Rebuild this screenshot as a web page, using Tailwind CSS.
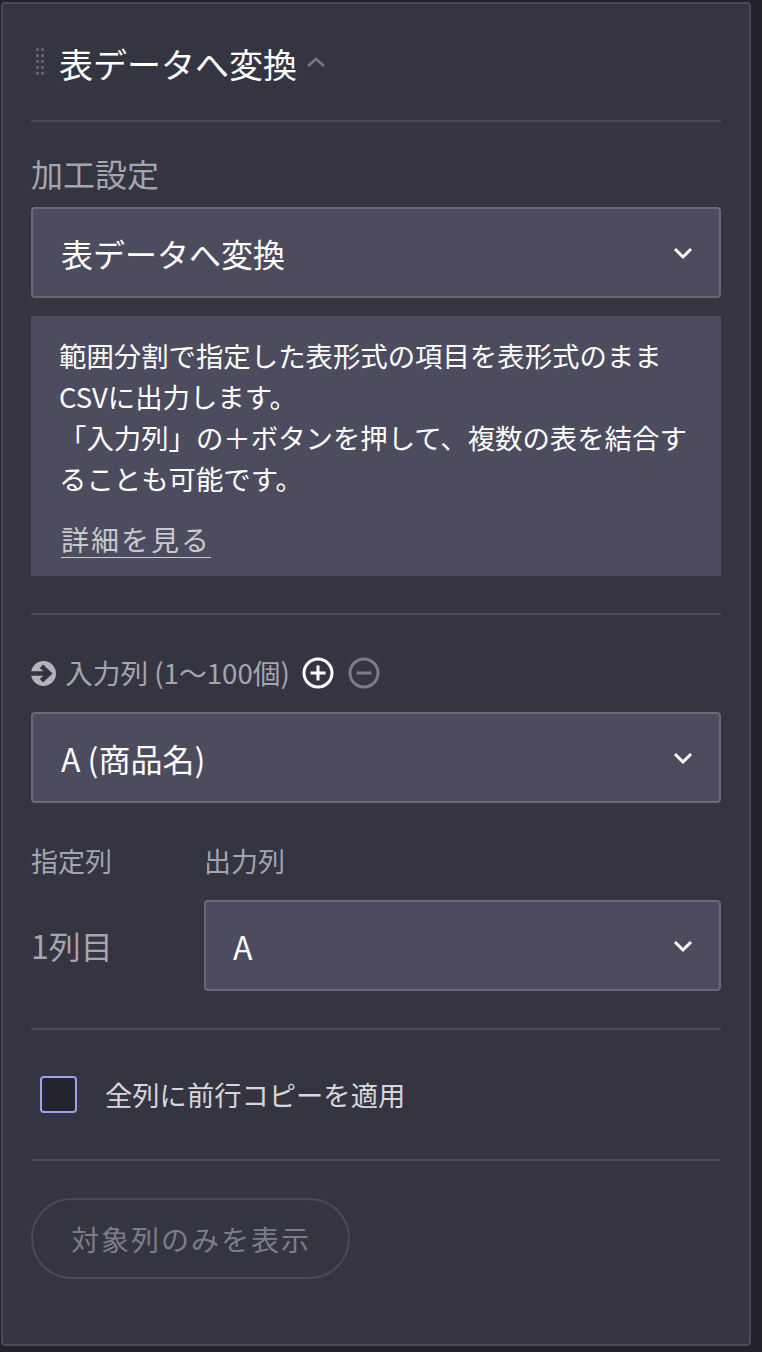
<!DOCTYPE html>
<html lang="ja">

<head>
    <meta charset="UTF-8">
    <title>表データへ変換</title>
    <script src="https://cdn.jsdelivr.net/npm/@tailwindcss/browser@4"></script>
</head>

<body class="bg-[#22222c] font-['Noto_Sans_CJK_JP','Noto_Sans',sans-serif]">
    <div class="ml-[1px] mt-[2px] w-[750px] h-[1344px] bg-[#343541] border-2 border-[#4a4a59] rounded-[4px] pl-[28px] pr-[28px] overflow-hidden">

        <!-- Header -->
        <div class="flex items-center h-[118px] border-b-2 border-[#4a4a59]">
            <svg class="w-[14px] h-[28px] mr-[14px]" viewBox="0 0 14 28" fill="#5f5f6e">
                <rect x="5" y="0" width="3" height="3" /><rect x="10" y="0" width="3" height="3" />
                <rect x="5" y="6" width="3" height="3" /><rect x="10" y="6" width="3" height="3" />
                <rect x="5" y="12" width="3" height="3" /><rect x="10" y="12" width="3" height="3" />
                <rect x="5" y="18" width="3" height="3" /><rect x="10" y="18" width="3" height="3" />
                <rect x="5" y="24" width="3" height="3" /><rect x="10" y="24" width="3" height="3" />
            </svg>
            <span class="mt-[3px] text-[34px] leading-[40px] text-white">表データへ変換</span>
            <svg class="w-[20px] h-[12px] ml-[9px] mt-[-1px]" viewBox="0 0 20 12" fill="none" stroke="#777785" stroke-width="2.5">
                <path d="M2 10 L10 3 L18 10" />
            </svg>
        </div>

        <!-- Settings -->
        <p class="mt-[31px] text-[32px] leading-[40px] text-[#a5a5b1]">加工設定</p>
        <div class="mt-[14px] h-[91px] bg-[#4c4c5e] border-2 border-[#686876] rounded-[4px] flex items-center justify-between pl-[28px] pr-[26px]">
            <span class="text-[32px] text-white">表データへ変換</span>
            <svg class="w-[20px] h-[14px]" viewBox="0 0 20 14" fill="none" stroke="#ffffff" stroke-width="3">
                <path d="M2 3 L10 11 L18 3" />
            </svg>
        </div>

        <div class="mt-[18px] h-[260px] bg-[#4c4c5e] pl-[28px] pr-[20px] pt-[19px] text-[27.4px] leading-[41px] text-white">
            <p>範囲分割で指定した表形式の項目を表形式のまま<br>CSVに出力します。<br>「入力列」の＋ボタンを押して、複数の表を結合す<br>ることも可能です。</p>
            <a class="block mt-[20px] pl-[2px] text-[28px] tracking-[2px] text-[#c8c8d0] underline decoration-1 underline-offset-[6px]">詳細を見る</a>
        </div>

        <div class="mt-[37px] border-b-2 border-[#4a4a59]"></div>

        <!-- Input columns -->
        <div class="mt-[36px] flex items-center h-[44px]">
            <svg class="w-[25px] h-[25px]" viewBox="0 0 24 24">
                <circle cx="12" cy="12" r="12" fill="#b4b4be" />
                <path d="M0 12 H16 M10 5 L17.5 12 L10 19" fill="none" stroke="#343541" stroke-width="4.5" />
            </svg>
            <span class="ml-[9px] text-[27.7px] text-[#a5a5b1]">入力列 (1～100個)</span>
            <svg class="w-[32px] h-[32px] ml-[12px]" viewBox="0 0 32 32" fill="none" stroke="#ffffff" stroke-width="3">
                <circle cx="16" cy="16" r="14" />
                <path d="M8.5 16 H23.5 M16 8.5 V23.5" />
            </svg>
            <svg class="w-[32px] h-[32px] ml-[14px]" viewBox="0 0 32 32" fill="none" stroke="#7c7c89" stroke-width="3">
                <circle cx="16" cy="16" r="14" />
                <path d="M8.5 16 H23.5" />
            </svg>
        </div>
        <div class="mt-[17px] h-[91px] bg-[#4c4c5e] border-2 border-[#686876] rounded-[4px] flex items-center justify-between pl-[28px] pr-[26px]">
            <span class="text-[32px] text-white">A (商品名)</span>
            <svg class="w-[20px] h-[14px]" viewBox="0 0 20 14" fill="none" stroke="#ffffff" stroke-width="3">
                <path d="M2 3 L10 11 L18 3" />
            </svg>
        </div>

        <div class="mt-[38px] grid grid-cols-[173px_1fr] items-center">
            <span class="text-[27px] leading-[40px] text-[#a5a5b1]">指定列</span>
            <span class="text-[27px] leading-[40px] text-[#a5a5b1]">出力列</span>
            <span class="mt-[17px] text-[32px] text-[#a5a5b1]">1列目</span>
            <div class="mt-[19px] h-[91px] bg-[#4c4c5e] border-2 border-[#686876] rounded-[4px] flex items-center justify-between pl-[27px] pr-[26px]">
                <span class="text-[32px] text-white">A</span>
                <svg class="w-[20px] h-[14px]" viewBox="0 0 20 14" fill="none" stroke="#ffffff" stroke-width="3">
                    <path d="M2 3 L10 11 L18 3" />
                </svg>
            </div>
        </div>

        <div class="mt-[37px] border-b-2 border-[#4a4a59]"></div>

        <!-- Checkbox -->
        <div class="mt-[46px] flex items-center">
            <span class="ml-[9px] w-[37px] h-[37px] bg-[#24242f] border-[2.5px] border-[#a09eef] rounded-[4px]"></span>
            <span class="ml-[28px] text-[27.3px] leading-[37px] text-[#d6d6dc]">全列に前行コピーを適用</span>
        </div>

        <div class="mt-[46px] border-b-2 border-[#4a4a59]"></div>

        <button class="mt-[37px] w-[319px] h-[81px] pl-[1px] border-2 border-[#4a4a59] rounded-full text-[28px] tracking-[2px] text-[#7d7d89]">対象列のみを表示</button>
    </div>
</body>

</html>
